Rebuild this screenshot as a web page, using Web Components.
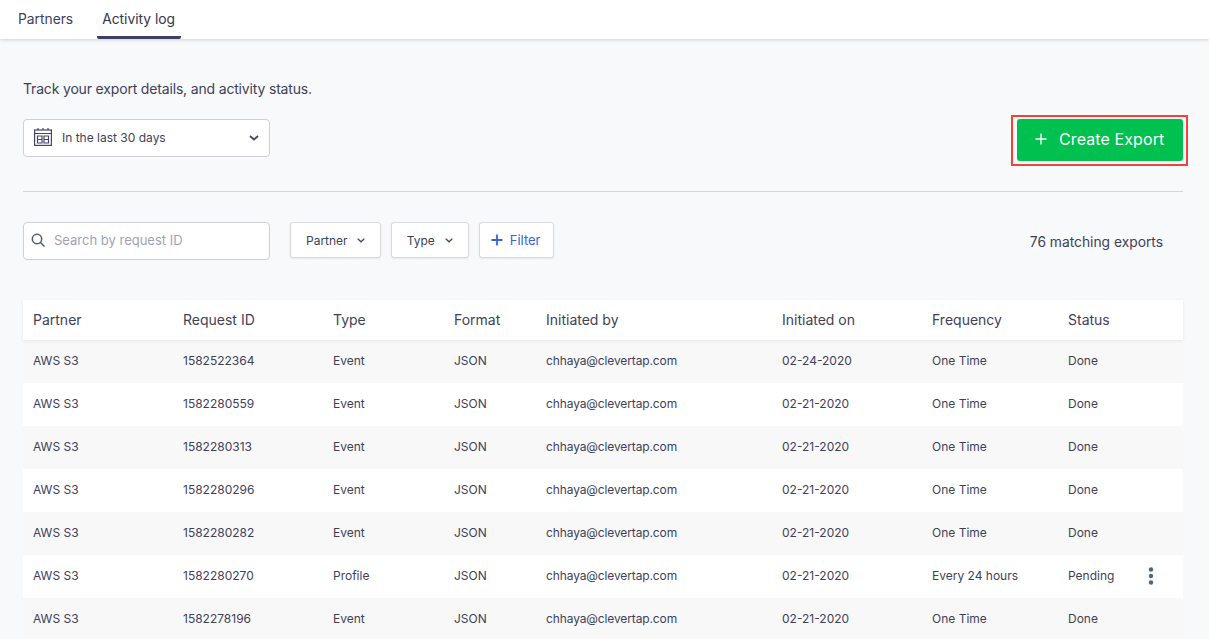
<!DOCTYPE html>
<html>
<head>
<meta charset="utf-8">
<title>Activity log</title>
<style>
  html, body { margin: 0; height: 639px; overflow: hidden; background: #f8f9fb; }
  body { font-family: Inter, "Liberation Sans", sans-serif; color: #3f3f5a; }
</style>
</head>
<body>
<tab-bar></tab-bar>
<export-page></export-page>

<script>
const CHEVRON = `<svg width="8" height="5" viewBox="0 0 8 5" fill="none"><path d="M.7 .7L4 3.800 7.300 .7" stroke="#3f4a5e" stroke-width="1.300"/></svg>`;

class TabBar extends HTMLElement {
  constructor() {
    super();
    this.attachShadow({mode: 'open'}).innerHTML = `
      <style>
        :host { display: flex; height: 39px; background: #fff; box-shadow: 0 1px 3px rgba(0,0,0,.16); padding-left: 13px; font-size: 13.800px; gap: 19px; position: relative; }
        div { padding: 0 5px; line-height: 38px; height: 39px; box-sizing: border-box; }
        .on { color: #34344e; padding-right: 6px; border-bottom: 3px solid #3f3f63; border-radius: 0 0 2px 2px; }
      </style>
      <div>Partners</div>
      <div class="on">Activity log</div>`;
  }
}

class DateSelect extends HTMLElement {
  constructor() {
    super();
    this.attachShadow({mode: 'open'}).innerHTML = `
      <style>
        :host { display: flex; align-items: center; box-sizing: border-box; width: 247px; height: 38px; background: #fff; border: 1px solid #cfcfd4; border-radius: 4px; padding: 0 10px; font-size: 12px; }
        span { margin: 0 0 2px 10px; flex: 1; }
        .cal { margin-bottom: 2px; }
      </style>
      <svg class="cal" width="18" height="18" viewBox="0 0 18 18" fill="none" stroke="#45456a" stroke-width="1.200">
        <rect x=".6" y="2" width="16.800" height="15.400"/>
        <path d="M.6 5.500h16.800M4 0v2M9 0v2M14 0v2"/>
        <path d="M3.500 8h4.500v7H3.500zM10 8h4.500v7H10zM3.500 11.500H8M10 11.500h4.500"/>
      </svg>
      <span><slot></slot></span>
      <svg width="10" height="6" viewBox="0 0 10 6" fill="none"><path d="M1 1l4 3.500 4-3.500" stroke="#4a4a70" stroke-width="2"/></svg>`;
  }
}

class FilterButton extends HTMLElement {
  constructor() {
    super();
    this.attachShadow({mode: 'open'}).innerHTML = `
      <style>
        :host { display: flex; align-items: center; gap: 9px; box-sizing: border-box; height: 36px; padding: 0 15px; background: #fff; border: 1px solid #d9d9de; border-radius: 3px; box-shadow: 0 1px 2px rgba(0,0,0,.08); font-size: 12px; }
      </style>
      <slot></slot>`;
  }
}

class DataRow extends HTMLElement {
  constructor() {
    super();
    const cols = (this.getAttribute('cells') || '').split('|');
    this.attachShadow({mode: 'open'}).innerHTML = `
      <style>
        :host { display: grid; grid-template-columns: 150px 150px 121px 92px 236px 150px 136px 1fr; align-items: center; box-sizing: border-box; height: 43px; padding: 0 0 2px 10px; font-size: 12px; background: #fff; position: relative; }
        :host([alt]) { background: #f8f8f9; }
        :host([head]) { height: 40px; padding-bottom: 1px; font-size: 14px; box-shadow: 0 1px 3px rgba(0,0,0,.08); z-index: 1; }
        .mail { letter-spacing: -.12px; }
        svg { position: absolute; left: 1124px; top: 12px; }
      </style>
      ${cols.map(c => `<div class="${c.includes('@') ? 'mail' : ''}">${c}</div>`).join('')}
      ${this.hasAttribute('menu') ? `<svg width="8" height="18" viewBox="0 0 8 18" fill="#52667a"><circle cx="4" cy="2.500" r="2.200"/><circle cx="4" cy="9" r="2.200"/><circle cx="4" cy="15.500" r="2.200"/></svg>` : ''}`;
  }
}

class ExportPage extends HTMLElement {
  constructor() {
    super();
    const row = (id, type, date, alt, extra) =>
      `<data-row ${alt ? 'alt' : ''} ${extra || ''} cells="AWS S3|${id}|${type}|JSON|chhaya@clevertap.com|${date}|${extra ? 'Every 24 hours' : 'One Time'}|${extra ? 'Pending' : 'Done'}"></data-row>`;
    this.attachShadow({mode: 'open'}).innerHTML = `
      <style>
        :host { display: block; padding: 0 26px 0 23px; }
        .top { display: flex; justify-content: space-between; align-items: flex-end; height: 152px; border-bottom: 1px solid #d6d6da; }
        .intro { padding: 41px 0 34px; }
        p { margin: 0 0 21px; font-size: 14px; letter-spacing: -.17px; line-height: 18px; }
        .create { position: relative; display: flex; align-items: center; gap: 12px; box-sizing: border-box; width: 166px; height: 42px; margin-bottom: 30px; padding: 0 0 2px 18px; background: #00c04f; color: #fff; font-size: 16px; letter-spacing: .1px; border-radius: 3px; }
        .create::after { content: ''; position: absolute; left: -6px; right: -5px; top: -4px; bottom: -5px; border: 2px solid #f44336; }
        .tools { display: flex; align-items: flex-start; height: 38px; padding: 30px 0 40px; gap: 10px; }
        .search { display: flex; align-items: center; gap: 9px; box-sizing: border-box; width: 247px; height: 38px; padding: 0 7px 3px; background: #fff; border: 1px solid #cfcfd4; border-radius: 4px; color: #a2a2b3; font-size: 13px; margin-right: 10px; }
        .count { margin-left: auto; padding-right: 20px; font-size: 13.800px; line-height: 40px; }
        .blue { color: #3a62e0; font-size: 13px; }
      </style>
      <div class="top">
        <div class="intro">
          <p>Track your export details, and activity status.</p>
          <date-select>In the last 30 days</date-select>
        </div>
        <div class="create">
          <svg width="12" height="12" viewBox="0 0 12 12" fill="none" stroke="#fff" stroke-width="1.300"><path d="M6 .5v11M.5 6h11"/></svg>
          <span>Create Export</span>
        </div>
      </div>
      <div class="tools">
        <div class="search">
          <svg width="14" height="14" viewBox="0 0 14 14" fill="none" stroke="#4a5c6c" stroke-width="1.500"><circle cx="6" cy="6" r="4.700"/><path d="M9.500 9.500l4 4"/></svg>
          <span>Search by request ID</span>
        </div>
        <filter-button>Partner ${CHEVRON}</filter-button>
        <filter-button style="gap: 10px">Type ${CHEVRON}</filter-button>
        <filter-button style="gap: 7px; padding: 0 12px 0 11px">
          <svg width="12" height="12" viewBox="0 0 12 12" fill="none" stroke="#3a62e0" stroke-width="1.800"><path d="M6 .5v11M.5 6h11"/></svg>
          <span class="blue">Filter</span>
        </filter-button>
        <div class="count">76 matching exports</div>
      </div>
      <data-row head cells="Partner|Request ID|Type|Format|Initiated by|Initiated on|Frequency|Status"></data-row>
      ${row('1582522364', 'Event', '02-24-2020', true)}
      ${row('1582280559', 'Event', '02-21-2020', false)}
      ${row('1582280313', 'Event', '02-21-2020', true)}
      ${row('1582280296', 'Event', '02-21-2020', false)}
      ${row('1582280282', 'Event', '02-21-2020', true)}
      ${row('1582280270', 'Profile', '02-21-2020', false, 'menu')}
      ${row('1582278196', 'Event', '02-21-2020', true)}`;
  }
}

customElements.define('tab-bar', TabBar);
customElements.define('date-select', DateSelect);
customElements.define('filter-button', FilterButton);
customElements.define('data-row', DataRow);
customElements.define('export-page', ExportPage);
</script>
</body>
</html>
